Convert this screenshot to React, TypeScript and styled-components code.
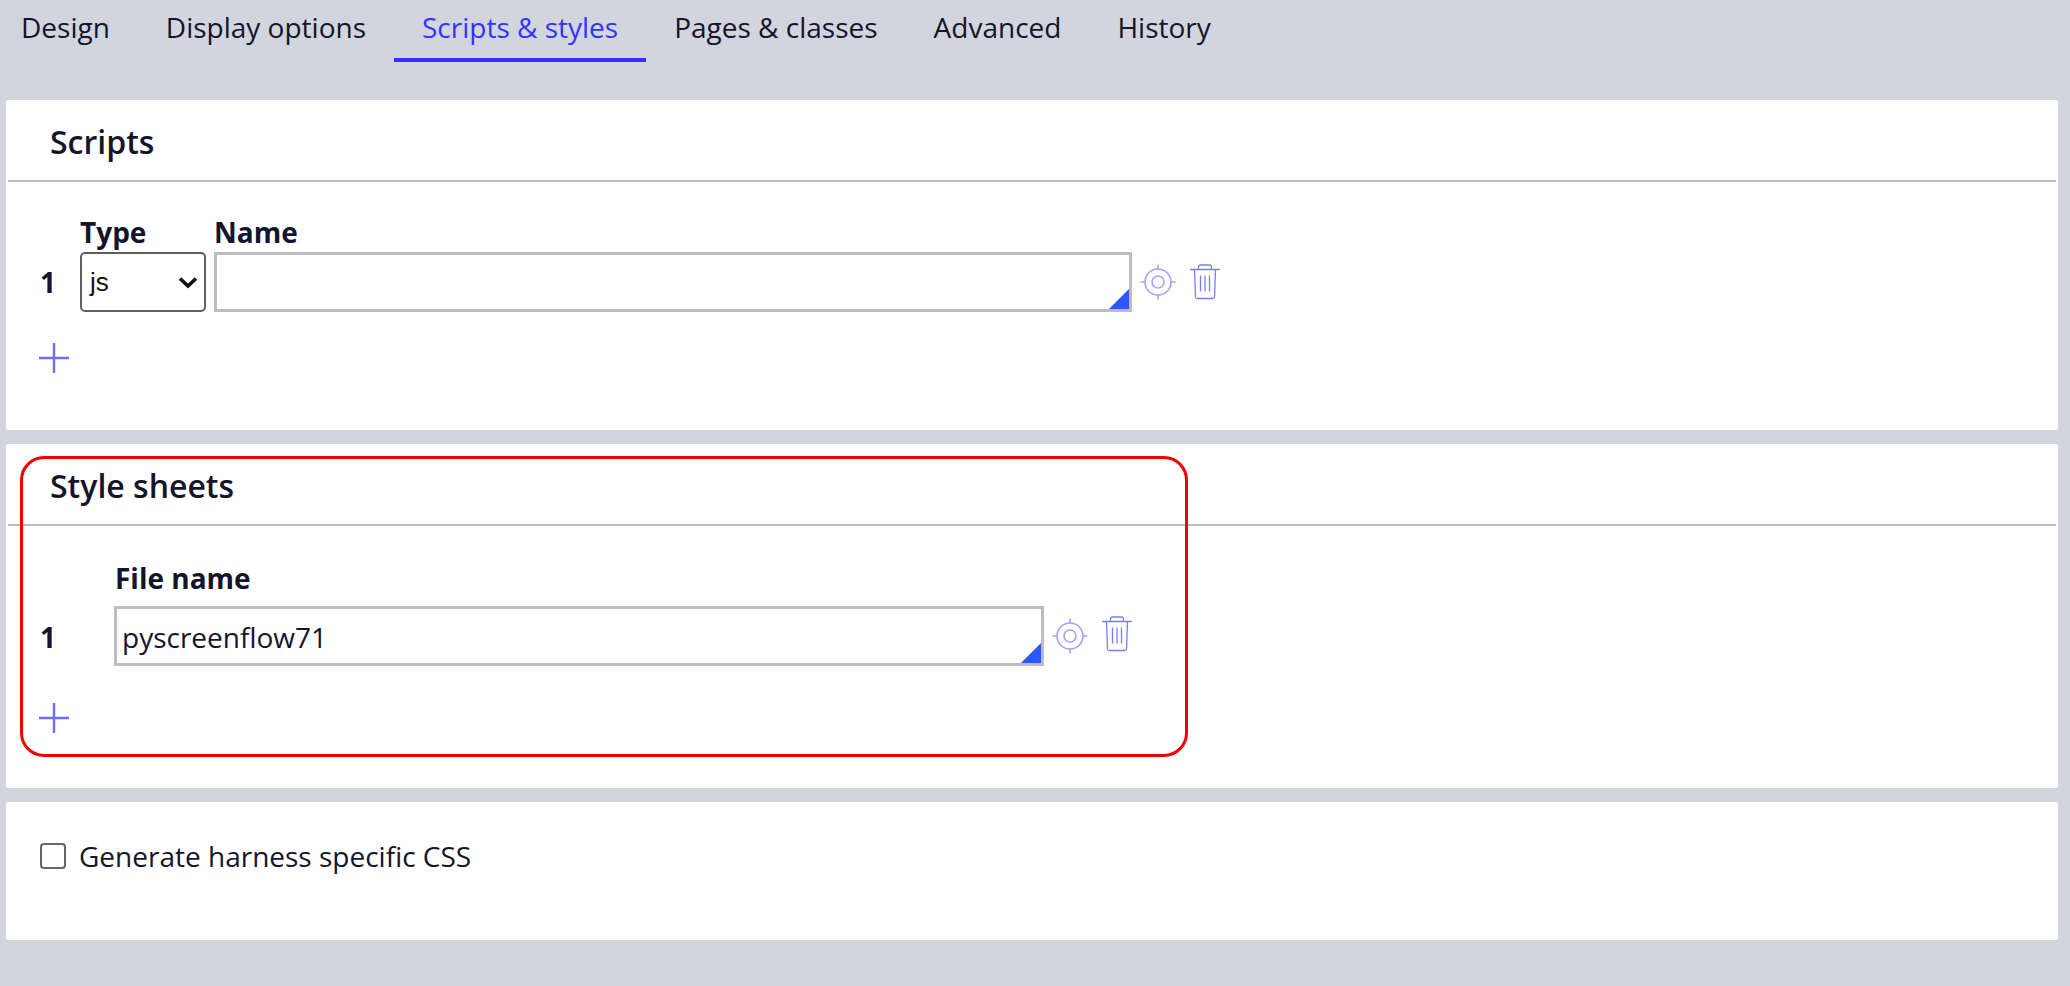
import React from "react";
import styled, { createGlobalStyle } from "styled-components";

const Global = createGlobalStyle`
  html, body { margin: 0; padding: 0; background: #d2d5de; }
  body { font-family: "Open Sans", "Liberation Sans", sans-serif; color: #14142b; }
`;

const Page = styled.div`
  width: 2070px;
  height: 986px;
  overflow: hidden;
  padding: 0 12px 0 6px;
  box-sizing: border-box;
`;

const TabBar = styled.nav`
  display: flex;
  height: 62px;
  margin: 0 0 38px -6px;
  padding-left: 21px;
`;

const Tab = styled.div<{ $active?: boolean; $first?: boolean }>`
  height: 62px;
  box-sizing: border-box;
  padding: 8px 28px 0;
  padding-left: ${(p) => (p.$first ? "0" : "28px")};
  font-size: 28px;
  line-height: 38px;
  white-space: nowrap;
  color: ${(p) => (p.$active ? "#3333ff" : "#14142b")};
  border-bottom: 4px solid ${(p) => (p.$active ? "#3333ff" : "transparent")};
`;

const Card = styled.section<{ $height: number }>`
  position: relative;
  height: ${(p) => p.$height}px;
  margin-bottom: 14px;
  background: #fff;
  border-radius: 2px;
`;

const CardHeader = styled.header<{ $height: number; $pad: number }>`
  height: ${(p) => p.$height}px;
  box-sizing: border-box;
  margin: 0 2px;
  padding: ${(p) => p.$pad}px 0 0 42px;
  border-bottom: 2px solid #bbbcc6;
  display: flex;
  align-items: center;
`;

const CardTitle = styled.h2`
  margin: 0;
  font-size: 32px;
  line-height: 40px;
  font-weight: 600;
`;

const FieldLabels = styled.div<{ $left: number; $top: number }>`
  display: flex;
  padding: ${(p) => p.$top}px 0 0 ${(p) => p.$left}px;
  height: 30px;
  font-size: 28px;
  line-height: 30px;
  font-weight: 700;
`;

const ColumnLabel = styled.span<{ $width?: number }>`
  width: ${(p) => (p.$width ? `${p.$width}px` : "auto")};
`;

const Row = styled.div<{ $top: number; $left: number }>`
  display: flex;
  align-items: center;
  margin-top: ${(p) => p.$top}px;
  padding-left: ${(p) => p.$left}px;
`;

const RowNumber = styled.span<{ $width: number; $drop: number }>`
  width: ${(p) => p.$width}px;
  flex: none;
  padding-top: ${(p) => p.$drop}px;
  font-size: 28px;
  line-height: 34px;
  font-weight: 700;
`;

const SelectBox = styled.div`
  width: 126px;
  height: 60px;
  box-sizing: border-box;
  margin-right: 8px;
  padding: 0 6px 0 8px;
  border: 2px solid #5f5f5f;
  border-radius: 5px;
  display: flex;
  align-items: center;
  justify-content: space-between;
  font-family: "Liberation Sans", sans-serif;
  font-size: 26px;
  color: #111;
`;

const Field = styled.div<{ $width: number }>`
  position: relative;
  width: ${(p) => p.$width}px;
  height: 60px;
  box-sizing: border-box;
  padding: 2px 0 0 5px;
  border: 3px solid #bdbdbd;
  display: flex;
  align-items: center;
  font-size: 28px;
  flex: none;
`;

const Corner = styled.span`
  position: absolute;
  right: 0;
  bottom: 0;
  width: 0;
  height: 0;
  border-style: solid;
  border-width: 0 0 20px 20px;
  border-color: transparent transparent #2a57ff transparent;
`;

const Actions = styled.div<{ $gap: number; $first: number; $trashLift: number }>`
  display: flex;
  align-items: center;
  gap: ${(p) => p.$gap}px;
  margin-left: ${(p) => p.$first}px;
  & > svg:last-child { margin-top: ${(p) => -p.$trashLift}px; }
`;

const AddButton = styled.div<{ $top: number }>`
  margin: ${(p) => p.$top}px 0 0 33px;
  width: 30px;
  height: 30px;
  color: #6e6eff;
`;

const CheckRow = styled.label`
  display: flex;
  align-items: center;
  padding: 36px 0 0 34px;
  font-size: 28px;
  line-height: 36px;
`;

const CheckBox = styled.span`
  width: 26px;
  height: 26px;
  box-sizing: border-box;
  margin-right: 13px;
  border: 2px solid #666;
  border-radius: 4px;
`;

const Highlight = styled.div`
  position: absolute;
  left: 14px;
  top: 12px;
  width: 1168px;
  height: 301px;
  box-sizing: border-box;
  border: 3px solid #f20000;
  border-radius: 24px;
  pointer-events: none;
`;

const Chevron = () => (
  <svg width="20" height="13" viewBox="0 0 20 13" fill="none">
    <path d="M2 2.5 L10 10 L18 2.5" stroke="#111" strokeWidth="3.6" />
  </svg>
);

const Locator = () => (
  <svg width="36" height="36" viewBox="0 0 36 36" fill="none" stroke="#a3a3ff" strokeWidth="1.6">
    <circle cx="18" cy="18" r="13" />
    <circle cx="18" cy="18" r="6" />
    <path d="M18 0.5V5M18 31V35.5M0.5 18H5M31 18H35.5" />
  </svg>
);

const Trash = () => (
  <svg width="30" height="36" viewBox="0 0 30 36" fill="none" stroke="#7c7cff" strokeWidth="1.3" strokeLinecap="round">
    <path d="M0.8 5.5H29.2" />
    <path d="M8.5 5.5V3a2 2 0 0 1 2-2h9a2 2 0 0 1 2 2v2.5" />
    <path d="M4.5 5.5L5.5 33a1.8 1.8 0 0 0 1.8 1.5h15.4a1.8 1.8 0 0 0 1.8-1.5L25.5 5.5" />
    <path d="M10.5 12V27M15 12V27M19.5 12V27" />
  </svg>
);

const Plus = () => (
  <svg width="30" height="30" viewBox="0 0 30 30" stroke="currentColor" strokeWidth="2.4">
    <path d="M15 0V30M0 15H30" />
  </svg>
);

const tabs = ["Design", "Display options", "Scripts & styles", "Pages & classes", "Advanced", "History"];

export default function App() {
  return (
    <Page>
      <Global />
      <TabBar>
        {tabs.map((t, i) => (
          <Tab key={t} $first={i === 0} $active={t === "Scripts & styles"}>
            {t}
          </Tab>
        ))}
      </TabBar>

      <Card $height={330}>
        <CardHeader $height={82} $pad={4}>
          <CardTitle>Scripts</CardTitle>
        </CardHeader>
        <FieldLabels $left={74} $top={35}>
          <ColumnLabel $width={134}>Type</ColumnLabel>
          <ColumnLabel>Name</ColumnLabel>
        </FieldLabels>
        <Row $top={5} $left={34}>
          <RowNumber $width={40} $drop={0}>1</RowNumber>
          <SelectBox>
            js
            <Chevron />
          </SelectBox>
          <Field $width={918}>
            <Corner />
          </Field>
          <Actions $gap={14} $first={8} $trashLift={0}>
            <Locator />
            <Trash />
          </Actions>
        </Row>
        <AddButton $top={31}>
          <Plus />
        </AddButton>
      </Card>

      <Card $height={344}>
        <CardHeader $height={82} $pad={3}>
          <CardTitle>Style sheets</CardTitle>
        </CardHeader>
        <Highlight />
        <FieldLabels $left={109} $top={37}>
          <ColumnLabel>File name</ColumnLabel>
        </FieldLabels>
        <Row $top={13} $left={34}>
          <RowNumber $width={74} $drop={2}>1</RowNumber>
          <Field $width={930}>
            pyscreenflow71
            <Corner />
          </Field>
          <Actions $gap={14} $first={8} $trashLift={5}>
            <Locator />
            <Trash />
          </Actions>
        </Row>
        <AddButton $top={37}>
          <Plus />
        </AddButton>
      </Card>

      <Card $height={138}>
        <CheckRow>
          <CheckBox />
          Generate harness specific CSS
        </CheckRow>
      </Card>
    </Page>
  );
}
